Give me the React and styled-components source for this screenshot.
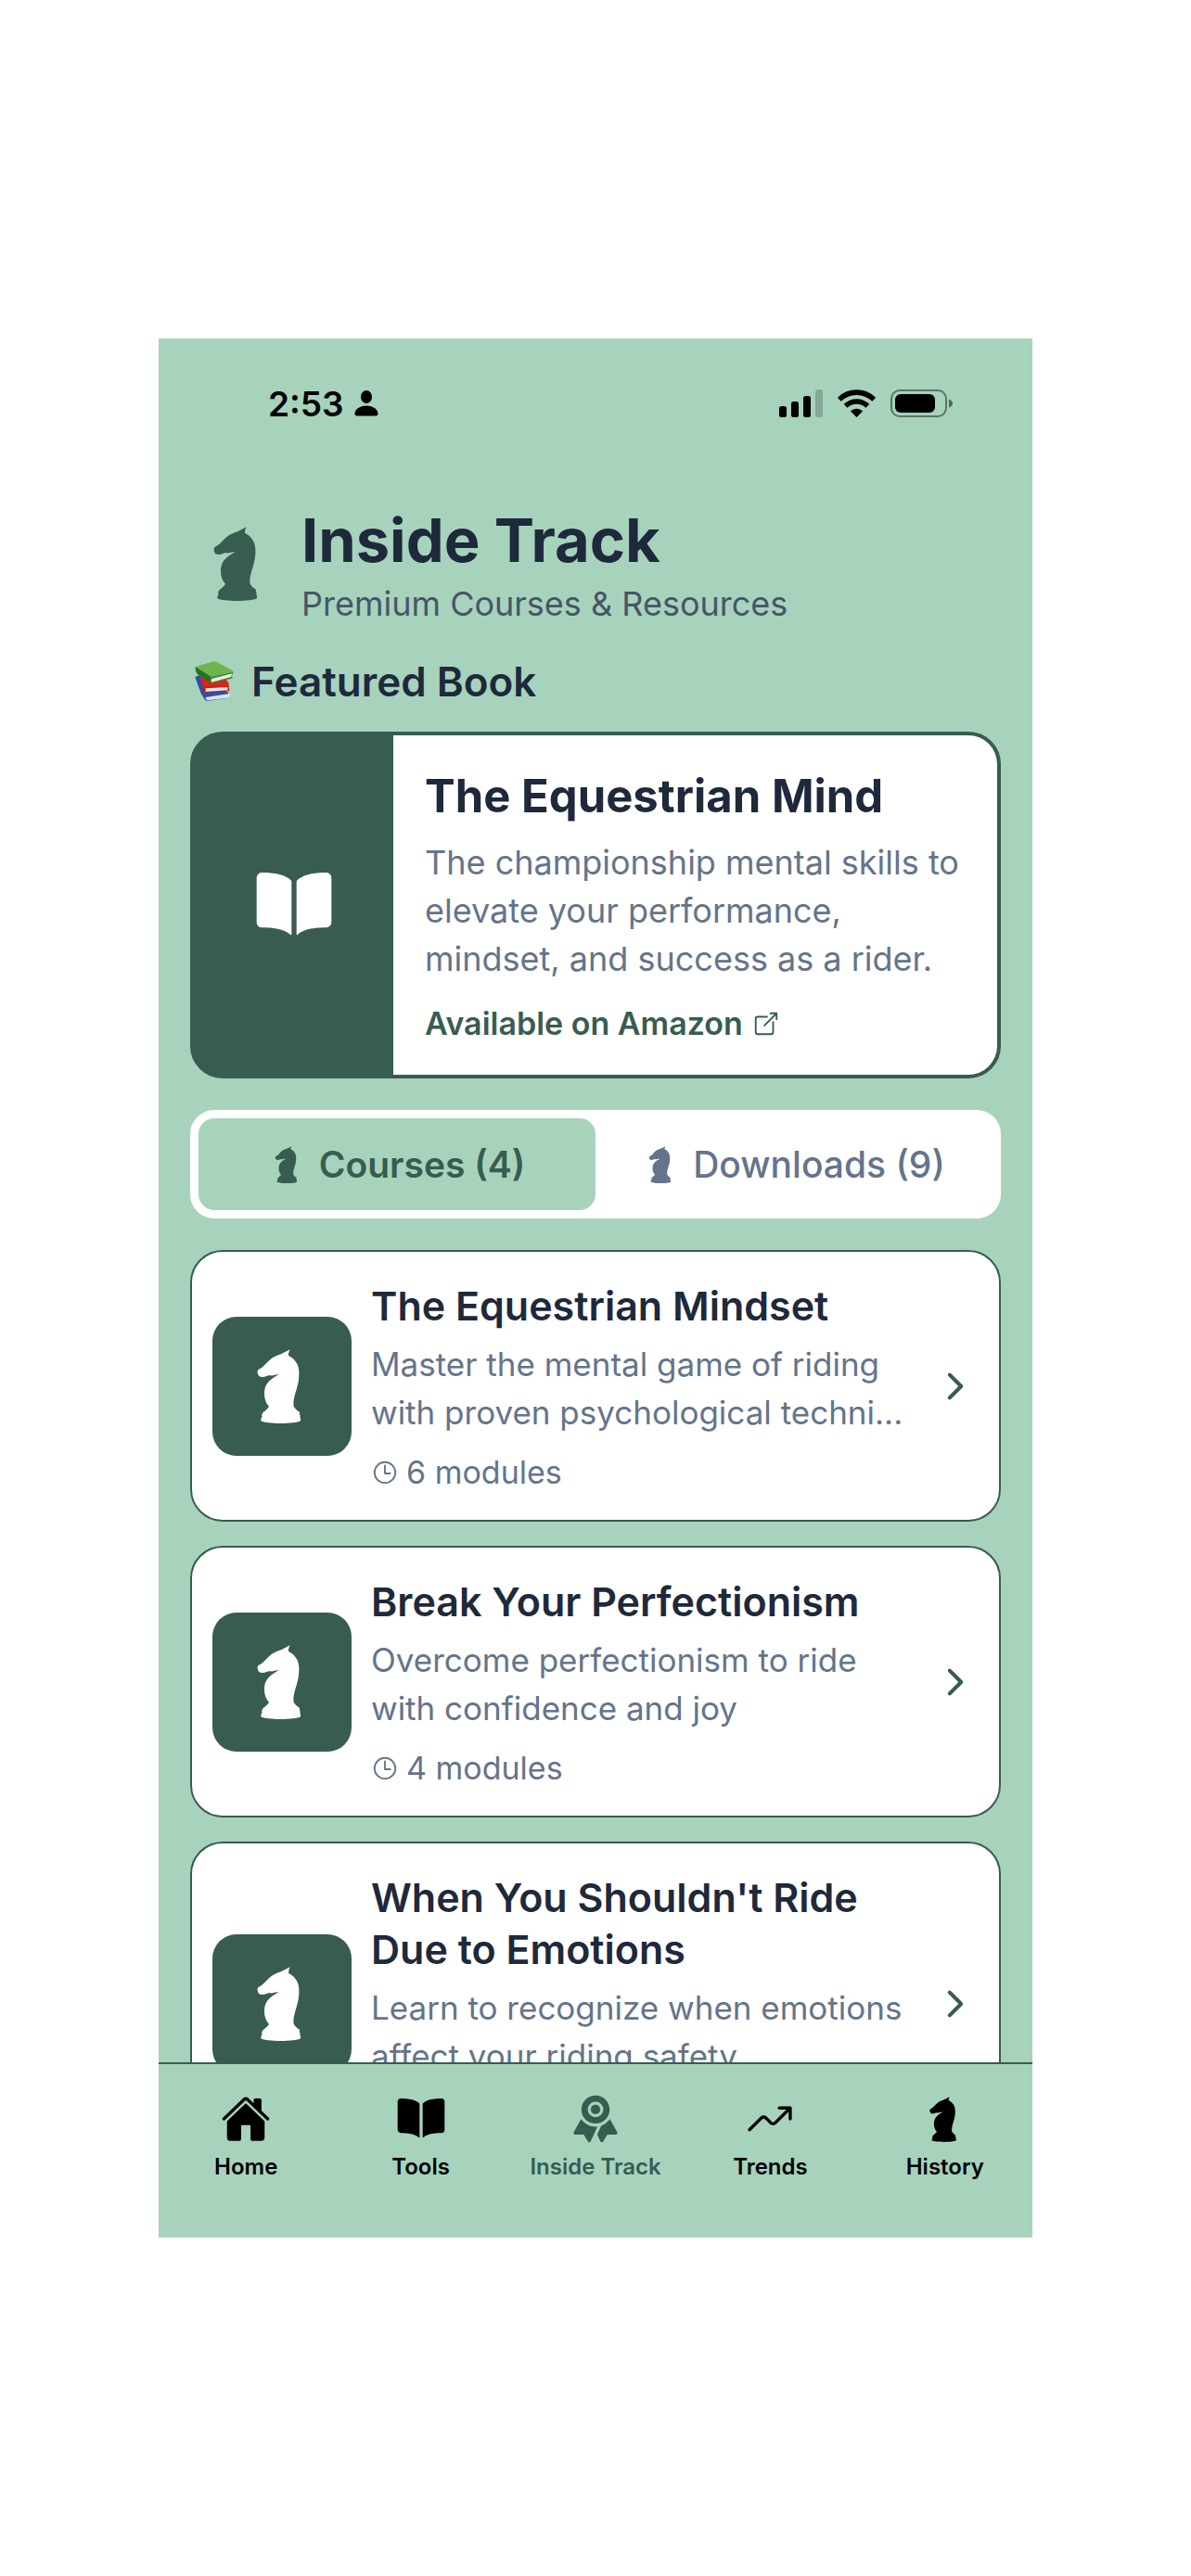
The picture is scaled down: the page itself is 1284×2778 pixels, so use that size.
import React, { useState } from "react";
import styled, { createGlobalStyle } from "styled-components";
import {
  IoBook,
  IoChevronForward,
  IoHome,
  IoOpenOutline,
  IoRibbon,
  IoTimeOutline,
  IoTrendingUp,
} from "react-icons/io5";

const mint = "#a7d3bc";
const forest = "#385c50";
const ink = "#1e293b";
const slate = "#64748b";

const GlobalStyle = createGlobalStyle`
  * {
    box-sizing: border-box;
  }
  body {
    margin: 0;
    background: #ffffff;
    font-family: Inter, "Liberation Sans", sans-serif;
  }
  h1, h2, h3, p {
    margin: 0;
  }
  svg {
    display: block;
    flex-shrink: 0;
  }
`;

const Page = styled.div`
  height: 100vh;
  padding: 365px 171px;
  display: flex;
`;

const Screen = styled.div`
  flex: 1;
  min-width: 0;
  display: flex;
  flex-direction: column;
  background-color: ${mint};
  overflow: hidden;
`;

const StatusBar = styled.div`
  flex-shrink: 0;
  height: 140px;
  padding: 0 86px 0 118px;
  display: flex;
  align-items: center;
  justify-content: space-between;
  color: #000;
`;

const Clock = styled.div`
  display: flex;
  align-items: center;
  gap: 11px;
  font-size: 37px;
  font-weight: 600;
`;

const StatusIcons = styled.div`
  display: flex;
  align-items: center;
  gap: 16px;
`;

const Content = styled.main`
  flex: 1;
  min-height: 0;
  overflow: hidden;
  padding: 38px 34px 0;
`;

const Header = styled.header`
  display: flex;
  align-items: center;
  gap: 16px;
  margin-bottom: 34px;
`;

const HeaderIcon = styled.div`
  padding: 0 12px;
  color: ${forest};
`;

const Title = styled.h1`
  font-size: 65px;
  line-height: 80px;
  font-weight: 700;
  color: ${ink};
`;

const Subtitle = styled.p`
  margin-top: 6px;
  font-size: 36px;
  line-height: 44px;
  color: #475569;
`;

const SectionTitle = styled.h2`
  display: flex;
  align-items: center;
  gap: 18px;
  padding-left: 5px;
  margin-bottom: 26px;
  font-size: 44px;
  line-height: 56px;
  font-weight: 600;
  color: ${ink};
`;

const BookCard = styled.section`
  display: flex;
  margin-bottom: 34px;
  border: 4px solid ${forest};
  border-radius: 35px;
  background-color: ${forest};
`;

const BookCover = styled.div`
  width: 215px;
  flex-shrink: 0;
  display: flex;
  align-items: center;
  justify-content: center;
  color: #fff;
`;

const BookInfo = styled.div`
  flex: 1;
  min-width: 0;
  padding: 34px 24px 34px 34px;
  border-radius: 0 31px 31px 0;
  background-color: #fff;
`;

const BookTitle = styled.h3`
  font-size: 49px;
  line-height: 64px;
  font-weight: 700;
  color: ${ink};
`;

const BookText = styled.p`
  margin: 13px 0 23px;
  font-size: 36px;
  line-height: 52px;
  color: ${slate};
`;

const BookLink = styled.a`
  display: flex;
  align-items: center;
  gap: 10px;
  font-size: 34px;
  line-height: 42px;
  font-weight: 600;
  color: ${forest};
  text-decoration: none;
`;

const Tabs = styled.div`
  display: flex;
  padding: 9px;
  margin-bottom: 34px;
  border-radius: 26px;
  background-color: #fff;
`;

const Tab = styled.button`
  flex: 1;
  height: 99px;
  display: flex;
  align-items: center;
  justify-content: center;
  gap: 14px;
  padding: 0;
  border: none;
  border-radius: 17px;
  font-family: inherit;
  font-size: 39px;
  cursor: pointer;
  font-weight: ${(props) => (props.$active ? 600 : 500)};
  color: ${(props) => (props.$active ? forest : slate)};
  background-color: ${(props) => (props.$active ? mint : "transparent")};
`;

const CourseList = styled.div`
  display: flex;
  flex-direction: column;
  gap: 26px;
`;

const Course = styled.a`
  display: flex;
  align-items: center;
  padding: 30px 25px 30px 22px;
  border: 2px solid ${forest};
  border-radius: 35px;
  background-color: #fff;
  color: ${slate};
  text-decoration: none;
`;

const CourseIcon = styled.div`
  width: 150px;
  height: 150px;
  flex-shrink: 0;
  display: flex;
  align-items: center;
  justify-content: center;
  border-radius: 26px;
  background-color: ${forest};
  color: #fff;
`;

const CourseInfo = styled.div`
  flex: 1;
  min-width: 0;
  padding: 0 12px 0 21px;
`;

const CourseTitle = styled.h3`
  font-size: 43px;
  line-height: 56px;
  font-weight: 600;
  color: ${ink};
`;

const CourseText = styled.p`
  margin: 9px 0 17px;
  font-size: 35px;
  line-height: 52px;
`;

const Modules = styled.div`
  display: flex;
  align-items: center;
  gap: 8px;
  font-size: 34px;
  line-height: 43px;
`;

const TabBar = styled.nav`
  flex-shrink: 0;
  height: 189px;
  padding-top: 32px;
  display: flex;
  border-top: 2px solid ${forest};
  background-color: ${mint};
`;

const TabBarItem = styled.a`
  flex: 1;
  display: flex;
  flex-direction: column;
  align-items: center;
  gap: 10px;
  font-size: 24px;
  line-height: 30px;
  font-weight: 600;
  white-space: nowrap;
  text-decoration: none;
  color: ${(props) => (props.$active ? forest : "#000")};
`;

const TabBarIcon = styled.div`
  height: 54px;
  display: flex;
  align-items: center;
`;

const Knight = ({ size }) => (
  <svg width={size} height={size} viewBox="53 81 240 240" fill="currentColor">
    <path d="M199 82Q193 92 194 101Q210 109 218 122C227 134 229 150 228 168C227 192 220 210 216 224C211 240 209 254 211 266C215 274 223 279 229 284Q232 287 229 291Q233 294 231 300Q234 304 233 313C224 319 196 321 169 321C142 321 114 319 105 313Q104 305 109 299Q106 294 109 290C111 283 126 277 131 266C120 254 116 240 116 224C116 199 128 185 144 174Q157 167 163 162Q154 164 148 164Q143 167 136 166C126 164 120 171 110 171C101 171 96 167 95 161C93 155 93 150 97 147C106 143 112 138 119 130C127 121 140 108 151 104C162 99 170 98 177 93Q187 88 199 82Z" />
  </svg>
);

const Person = () => (
  <svg width="26" height="28" viewBox="0 0 26 28" fill="currentColor">
    <ellipse cx="13" cy="7" rx="6" ry="7" />
    <path d="M13 16.5C20.5 16.5 25.5 21 25.5 25Q25.5 27.5 22.8 27.5H3.2Q.5 27.5 .5 25C.5 21 5.5 16.5 13 16.5Z" />
  </svg>
);

const Signal = () => (
  <svg width="47" height="30" viewBox="0 0 47 30" fill="currentColor">
    <rect x="0" y="18" width="8" height="12" rx="2.5" />
    <rect x="13" y="13" width="8" height="17" rx="2.5" />
    <rect x="26" y="7" width="8" height="23" rx="2.5" />
    <rect x="39" y="0" width="8" height="30" rx="2.5" opacity=".2" />
  </svg>
);

const Wifi = () => (
  <svg width="41" height="30" viewBox="0 0 41 30" fill="none">
    <path d="M1.8 10.8C12.5 .6 28.5 .6 39.2 10.8" stroke="currentColor" strokeWidth="5.6" />
    <path d="M8.6 17.8C15.2 11.4 25.8 11.4 32.4 17.8" stroke="currentColor" strokeWidth="5.4" />
    <path d="M14 23.6C17.8 19.8 23.2 19.8 27 23.6L20.5 30Z" fill="currentColor" />
  </svg>
);

const Battery = () => (
  <svg width="67" height="30" viewBox="0 0 67 30" fill="currentColor">
    <rect x="1" y="1" width="59" height="28" rx="9" fill="none" stroke="currentColor" strokeWidth="2" opacity=".45" />
    <rect x="5" y="5" width="43" height="20" rx="6" />
    <path d="M63 10.5Q67 12 67 15T63 19.5Z" opacity=".5" />
  </svg>
);

const Books = () => (
  <svg width="43" height="44" viewBox="0 0 129 132">
    <path d="M1 52L14 46L105 100L118 118L38 129Q31 124 20 104Z" fill="#2d4fa5" />
    <path d="M34 117L113 105L117 118L40 127Z" fill="#dfe3ea" />
    <path d="M19 50L96 52L109 70L110 82L28 85L20 64Z" fill="#dc2315" />
    <path d="M28 84L110 80L112 97L32 102Q23 95 28 84Z" fill="#c91b10" />
    <path d="M35 88L106 84L107 94L35 99Z" fill="#e6e4e3" />
    <path d="M2 18L60 1Q66 0 72 3L122 31L126 36L54 55L2 29Z" fill="#6fb54f" />
    <path d="M2 18L52 50Q45 56 49 66L54 72L9 43L3 32Z" fill="#23741f" />
    <path d="M51 52L124 35L119 52L125 55L53 72Q45 64 51 52Z" fill="#3f8a2b" />
    <path d="M55 57L121 40L117 51L55 68Q50 63 55 57Z" fill="#ece9ee" />
  </svg>
);

const courses = [
  {
    title: "The Equestrian Mindset",
    text: "Master the mental game of riding with proven psychological techni...",
    modules: 6,
  },
  {
    title: "Break Your Perfectionism",
    text: "Overcome perfectionism to ride with confidence and joy",
    modules: 4,
  },
  {
    title: "When You Shouldn't Ride Due to Emotions",
    text: "Learn to recognize when emotions affect your riding safety",
    modules: 4,
  },
];

const navItems = [
  { label: "Home", icon: <IoHome size={54} /> },
  { label: "Tools", icon: <IoBook size={54} /> },
  { label: "Inside Track", icon: <IoRibbon size={54} />, active: true },
  { label: "Trends", icon: <IoTrendingUp size={54} /> },
  { label: "History", icon: <Knight size={49} /> },
];

const App = () => {
  const [tab, setTab] = useState("courses");

  return (
    <>
      <GlobalStyle />
      <Page>
        <Screen>
          <StatusBar>
            <Clock>
              2:53 <Person />
            </Clock>
            <StatusIcons>
              <Signal />
              <Wifi />
              <Battery />
            </StatusIcons>
          </StatusBar>
          <Content>
            <Header>
              <HeaderIcon>
                <Knight size={80} />
              </HeaderIcon>
              <div>
                <Title>Inside Track</Title>
                <Subtitle>Premium Courses &amp; Resources</Subtitle>
              </div>
            </Header>
            <SectionTitle>
              <Books />
              Featured Book
            </SectionTitle>
            <BookCard>
              <BookCover>
                <IoBook size={86} />
              </BookCover>
              <BookInfo>
                <BookTitle>The Equestrian Mind</BookTitle>
                <BookText>
                  The championship mental skills to elevate your performance, mindset, and success as a rider.
                </BookText>
                <BookLink href="#amazon">
                  Available on Amazon <IoOpenOutline size={30} />
                </BookLink>
              </BookInfo>
            </BookCard>
            <Tabs>
              <Tab type="button" $active={tab === "courses"} onClick={() => setTab("courses")}>
                <Knight size={40} />
                Courses (4)
              </Tab>
              <Tab type="button" $active={tab === "downloads"} onClick={() => setTab("downloads")}>
                <Knight size={40} />
                Downloads (9)
              </Tab>
            </Tabs>
            <CourseList>
              {courses.map((course) => (
                <Course key={course.title} href="#course">
                  <CourseIcon>
                    <Knight size={80} />
                  </CourseIcon>
                  <CourseInfo>
                    <CourseTitle>{course.title}</CourseTitle>
                    <CourseText>{course.text}</CourseText>
                    <Modules>
                      <IoTimeOutline size={30} />
                      {course.modules} modules
                    </Modules>
                  </CourseInfo>
                  <IoChevronForward size={44} color={forest} />
                </Course>
              ))}
            </CourseList>
          </Content>
          <TabBar>
            {navItems.map((item) => (
              <TabBarItem key={item.label} href="#nav" $active={item.active}>
                <TabBarIcon>{item.icon}</TabBarIcon>
                {item.label}
              </TabBarItem>
            ))}
          </TabBar>
        </Screen>
      </Page>
    </>
  );
};

export default App;
